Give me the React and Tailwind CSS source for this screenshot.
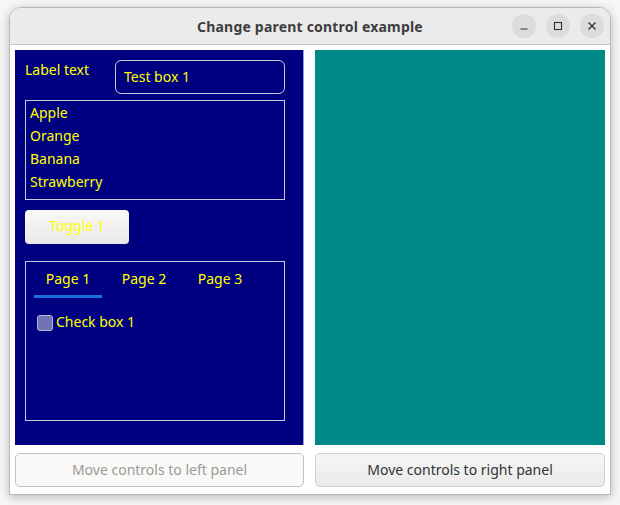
import React from "react";

const F = { fontFamily: '"Noto Sans", "DejaVu Sans", sans-serif' };

export default function App() {
  return (
    <div className="w-[620px] h-[505px] bg-[#f6f6f6] overflow-hidden pt-[7px]" style={F}>
      <div className="ml-[9px] w-[602px] h-[488px] rounded-t-[12px] border border-[#b8b8b8] bg-white shadow-[0_2px_10px_rgba(0,0,0,0.25)] overflow-hidden flex flex-col">
        <div className="relative h-[37px] shrink-0 bg-[#ebebeb] border-b border-[#c8c8c8] flex items-center justify-center">
          <span className="text-[14px] font-bold text-[#3d3d3d] tracking-[0.2px]">Change parent control example</span>
          <div className="absolute right-[6px] top-[6px] flex gap-[10px]">
            <div className="w-[24px] h-[24px] rounded-full bg-[#dcdcdc] flex items-center justify-center">
              <svg width="10" height="10" viewBox="0 0 10 10"><path d="M1.5 8h7" stroke="#2e2e2e" strokeWidth="1.2" /></svg>
            </div>
            <div className="w-[24px] h-[24px] rounded-full bg-[#dcdcdc] flex items-center justify-center">
              <svg width="10" height="10" viewBox="0 0 10 10"><rect x="1.5" y="1.5" width="7" height="7" fill="none" stroke="#2e2e2e" strokeWidth="1.1" /></svg>
            </div>
            <div className="w-[24px] h-[24px] rounded-full bg-[#dcdcdc] flex items-center justify-center">
              <svg width="10" height="10" viewBox="0 0 10 10"><path d="M1.5 1.5l7 7M8.5 1.5l-7 7" stroke="#2e2e2e" strokeWidth="1.2" /></svg>
            </div>
          </div>
        </div>
        <div className="flex-1 px-[5px] pt-[5px] flex flex-col">
          <div className="flex gap-[11px] h-[395px]">
            <div className="w-[289px] h-full bg-[#000080] border-r border-[#9a9ad0] pl-[10px] pt-[10px]">
              <div className="flex items-start h-[34px]">
                <span className="w-[90px] text-[14px] text-[#ffff00] leading-[20px] mt-[0px]">Label text</span>
                <div className="w-[170px] h-[34px] rounded-[6px] border border-[#c8c8d8] flex items-center pl-[8px] pb-[2px]">
                  <span className="text-[14px] text-[#ffff00]">Test box 1</span>
                </div>
              </div>
              <div className="mt-[6px] w-[260px] h-[100px] border border-[#c8c8d8] pl-[4px] pt-0 flex flex-col">
                {["Apple", "Orange", "Banana", "Strawberry"].map((t) => (
                  <span key={t} className="h-[23px] leading-[23px] text-[14px] text-[#ffff00]">{t}</span>
                ))}
              </div>
              <div className="mt-[10px] w-[104px] h-[34px] rounded-[4px] bg-gradient-to-b from-[#f8f8f7] to-[#ebe9e7] flex items-center justify-center pb-[3px]">
                <span className="text-[14px] text-[#ffff00]">Toggle 1</span>
              </div>
              <div className="mt-[17px] w-[260px] h-[160px] border border-[#c8c8d8] pt-[5px]">
                <div className="flex pl-[8px]">
                  <div className="w-[68px] h-[31px] flex flex-col items-center justify-between">
                    <span className="text-[14px] text-[#ffff00] leading-[24px]">Page 1</span>
                    <div className="w-[68px] h-[3px] bg-[#1c6fe0]" />
                  </div>
                  <div className="w-[84px] h-[31px] flex justify-center">
                    <span className="text-[14px] text-[#ffff00] leading-[24px]">Page 2</span>
                  </div>
                  <div className="w-[68px] h-[31px] flex justify-center">
                    <span className="text-[14px] text-[#ffff00] leading-[24px]">Page 3</span>
                  </div>
                </div>
                <div className="mt-[15px] pl-[11px] flex items-center gap-[3px]">
                  <div className="w-[16px] h-[16px] rounded-[3px] bg-[#7272b8] border border-[#b4b4d8]" />
                  <span className="text-[14px] text-[#ffff00] leading-[18px] mb-[1px]">Check box 1</span>
                </div>
              </div>
            </div>
            <div className="w-[290px] h-full bg-[#008a87]" />
          </div>
          <div className="flex gap-[11px] mt-[8px]">
            <div className="w-[289px] h-[34px] rounded-[5px] border border-[#c4c2bf] bg-[#faf9f8] flex items-center justify-center pb-[2px]">
              <span className="text-[14px] text-[#9a9996]">Move controls to left panel</span>
            </div>
            <div className="w-[290px] h-[34px] rounded-[5px] border border-[#d0cecb] bg-gradient-to-b from-[#f6f5f4] to-[#ecebe9] flex items-center justify-center pb-[2px]">
              <span className="text-[14px] text-[#2e3436]">Move controls to right panel</span>
            </div>
          </div>
        </div>
      </div>
    </div>
  );
}
